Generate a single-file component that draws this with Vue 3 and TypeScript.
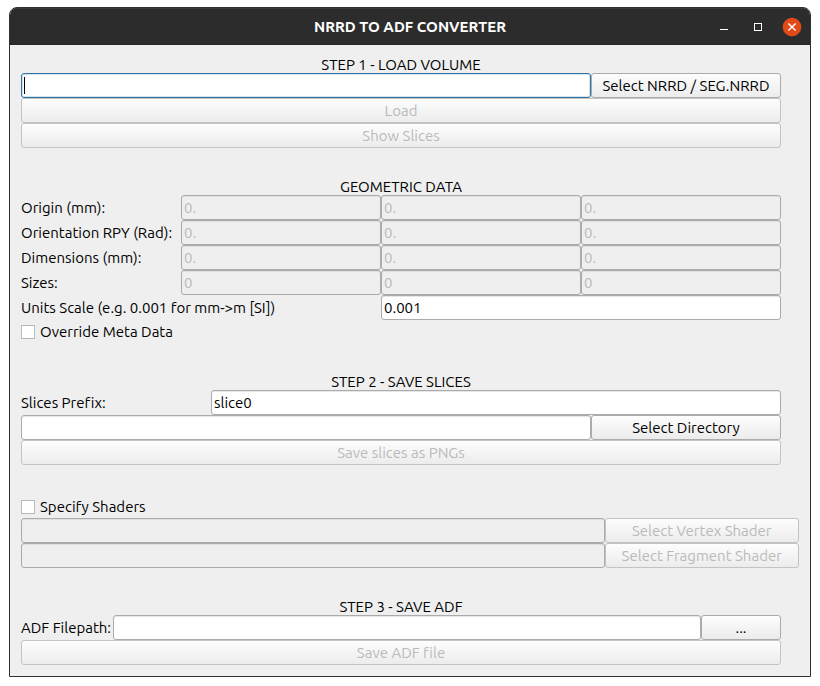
<script setup lang="ts">
import { reactive, ref } from 'vue'

interface VectorRow {
  id: string
  label: string
  values: string[]
}

const axes = ['X', 'Y', 'Z']

const geometry = reactive<VectorRow[]>([
  { id: 'origin', label: 'Origin (mm):', values: ['0.', '0.', '0.'] },
  { id: 'orientation', label: 'Orientation RPY (Rad):', values: ['0.', '0.', '0.'] },
  { id: 'dimensions', label: 'Dimensions (mm):', values: ['0.', '0.', '0.'] },
  { id: 'sizes', label: 'Sizes:', values: ['0', '0', '0'] },
])

const volumePath = ref('')
const unitsScale = ref('0.001')
const overrideMeta = ref(false)
const slicesPrefix = ref('slice0')
const slicesDirectory = ref('')
const specifyShaders = ref(false)
const vertexShader = ref('')
const fragmentShader = ref('')
const adfPath = ref('')
</script>

<template>
  <main class="window">
    <header class="titlebar">
      <h1 class="title">NRRD TO ADF CONVERTER</h1>
      <div class="window-controls">
        <button type="button" class="control" aria-label="Minimize">
          <svg viewBox="0 0 20 20" width="20" height="20"><path d="M6 12.5h8" stroke="#fff" fill="none" /></svg>
        </button>
        <button type="button" class="control" aria-label="Maximize">
          <svg viewBox="0 0 20 20" width="20" height="20"><rect x="6.5" y="6.5" width="7" height="7" stroke="#fff" fill="none" /></svg>
        </button>
        <button type="button" class="control" aria-label="Close">
          <svg viewBox="0 0 20 20" width="20" height="20">
            <circle cx="10" cy="10" r="9.3" fill="#e24a18" />
            <path d="M6.4 6.4l7.2 7.2M13.6 6.4l-7.2 7.2" stroke="#fff" stroke-width="1.4" fill="none" />
          </svg>
        </button>
      </div>
    </header>

    <form class="content" @submit.prevent>
      <section class="group">
        <h2 class="heading">STEP 1 - LOAD VOLUME</h2>
        <div class="row split">
          <div class="active-field">
            <input v-model="volumePath" class="field focused" type="text" aria-label="Volume file" />
            <span class="caret"></span>
          </div>
          <button type="button" class="button">Select NRRD / SEG.NRRD</button>
        </div>
        <button type="button" class="button" disabled>Load</button>
        <button type="button" class="button" disabled>Show Slices</button>
      </section>

      <section class="group">
        <h2 class="heading">GEOMETRIC DATA</h2>
        <div v-for="row in geometry" :key="row.id" class="row vector">
          <label class="label" :for="`${row.id}-0`">{{ row.label }}</label>
          <input
            v-for="(axis, i) in axes"
            :id="`${row.id}-${i}`"
            :key="axis"
            v-model="row.values[i]"
            class="field"
            type="text"
            :aria-label="`${row.label} ${axis}`"
            disabled
          />
        </div>
        <div class="row units">
          <label class="label" for="units-scale">Units Scale (e.g. 0.001 for mm-&gt;m [SI])</label>
          <input id="units-scale" v-model="unitsScale" class="field" type="text" />
        </div>
        <label class="check">
          <input v-model="overrideMeta" class="box" type="checkbox" />
          <span>Override Meta Data</span>
        </label>
      </section>

      <section class="group">
        <h2 class="heading">STEP 2 - SAVE SLICES</h2>
        <div class="row prefix">
          <label class="label" for="slices-prefix">Slices Prefix:</label>
          <input id="slices-prefix" v-model="slicesPrefix" class="field" type="text" />
        </div>
        <div class="row split">
          <input v-model="slicesDirectory" class="field" type="text" aria-label="Slices directory" />
          <button type="button" class="button">Select Directory</button>
        </div>
        <button type="button" class="button" disabled>Save slices as PNGs</button>
      </section>

      <section class="group wide">
        <label class="check">
          <input v-model="specifyShaders" class="box" type="checkbox" />
          <span>Specify Shaders</span>
        </label>
        <div class="row split">
          <input v-model="vertexShader" class="field" type="text" aria-label="Vertex shader" disabled />
          <button type="button" class="button" disabled>Select Vertex Shader</button>
        </div>
        <div class="row split">
          <input v-model="fragmentShader" class="field" type="text" aria-label="Fragment shader" disabled />
          <button type="button" class="button" disabled>Select Fragment Shader</button>
        </div>
      </section>

      <section class="group">
        <h2 class="heading">STEP 3 - SAVE ADF</h2>
        <div class="row filepath">
          <label class="label" for="adf-path">ADF Filepath:</label>
          <input id="adf-path" v-model="adfPath" class="field" type="text" />
          <button type="button" class="button">...</button>
        </div>
        <button type="button" class="button" disabled>Save ADF file</button>
      </section>
    </form>
  </main>
</template>

<style>
body {
  background: #fff;
}
</style>

<style scoped>
.window,
.window * {
  box-sizing: border-box;
}

.window {
  margin: 7px 9px 9px;
  overflow: hidden;
  border: 1px solid #303030;
  border-radius: 8px 8px 0 0;
  background: #efefef;
  color: #000;
  font-family: Ubuntu, "Noto Sans", "Open Sans", sans-serif;
  font-size: 15px;
  line-height: 16px;
  font-variant-ligatures: none;
}

.titlebar {
  display: grid;
  grid-template-columns: 1fr auto 1fr;
  align-items: center;
  height: 37px;
  padding: 0 8px;
  border-top: 1px solid #3a3a3a;
  border-bottom: 1px solid #262626;
  background: #2c2c2c;
  color: #fff;
}

.title {
  grid-column: 2;
  margin: 0;
  font-size: 15px;
  font-weight: 700;
}

.window-controls {
  display: flex;
  justify-content: flex-end;
  gap: 14px;
}

.control {
  width: 20px;
  height: 20px;
  padding: 0;
  border: 0;
  background: none;
}

.control svg {
  display: block;
}

.content {
  display: flex;
  flex-direction: column;
  gap: 31px;
  padding: 12px 11px 11px;
}

.group {
  display: flex;
  flex-direction: column;
  margin-right: 18px;
}

.wide {
  margin-right: 0;
}

.heading {
  margin: 0;
  font-size: 15px;
  font-weight: 400;
  text-align: center;
}

.row {
  display: grid;
  align-items: center;
}

.split {
  grid-template-columns: 3fr 1fr;
}

.vector {
  grid-template-columns: 160px repeat(3, 1fr);
}

.units {
  grid-template-columns: 9fr 10fr;
}

.prefix {
  grid-template-columns: 1fr 3fr;
}

.filepath {
  grid-template-columns: 92px 1fr 80px;
}

.label {
  white-space: nowrap;
}

.field,
.button {
  width: 100%;
  min-width: 0;
  height: 25px;
  margin: 0;
  border: 1px solid #ababab;
  border-radius: 3px;
  color: #000;
  font: inherit;
  font-variant-ligatures: none;
}

.field {
  padding: 0 2px;
  outline: none;
  background: #fff;
  box-shadow: inset 0 1px #e6e6e6;
}

.field:disabled {
  background: #efefef;
  color: #bababa;
  box-shadow: inset 0 1px #dfdfdf;
}

.active-field {
  position: relative;
  display: flex;
}

.focused {
  border-color: #2f74a3;
  box-shadow: inset 0 0 0 1px #d5e5ef;
  caret-color: transparent;
}

.caret {
  position: absolute;
  top: 4px;
  left: 3px;
  width: 1px;
  height: 17px;
  background: #000;
}

.button {
  padding: 0;
  background: linear-gradient(#fdfdfd, #ececec);
  text-align: center;
  white-space: nowrap;
}

.button:disabled {
  border-color: #c3c3c3;
  color: #bababa;
}

.check {
  display: flex;
  align-items: center;
  align-self: flex-start;
  gap: 5px;
  height: 23px;
}

.wide .check {
  height: 22px;
}

.box {
  width: 14px;
  height: 14px;
  margin: 0;
  appearance: none;
  border: 1px solid #b8b8b8;
  background: #fff;
}

.box:checked {
  background: #308cc6;
}
</style>
